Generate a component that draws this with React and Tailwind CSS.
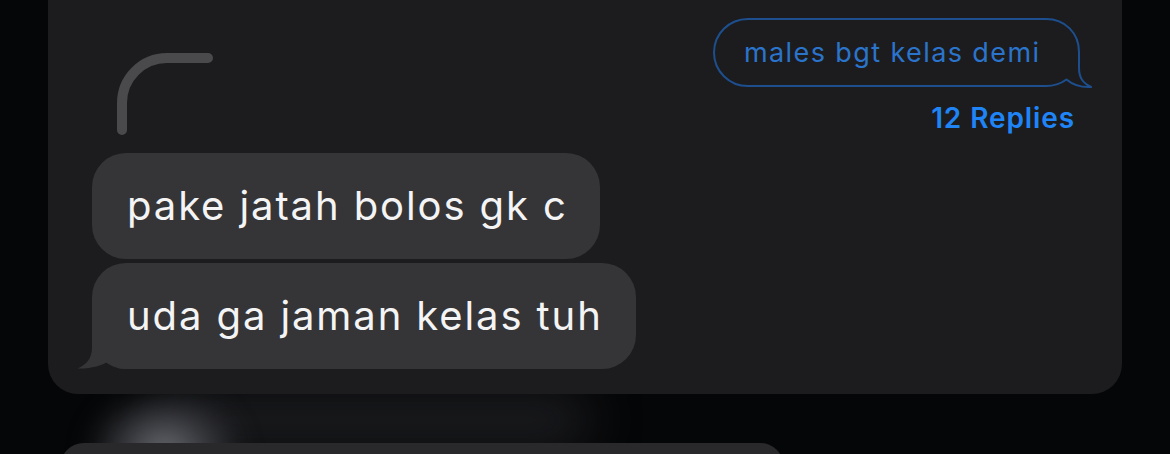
import React from "react";

function OutlineBubble() {
  return (
    <div className="relative w-[367px] h-[69px] flex items-center pl-[31px]">
      <svg
        className="absolute left-0 top-0 overflow-visible"
        width="380"
        height="71"
        viewBox="0 0 380 71"
        fill="none"
      >
        <path
          d="M35 1 H333 C352 1 366 15 366 34 V50 C366 60 370 65 378 69 C369 69.5 360 67 353.5 61.5 C348 65.5 342 68 333 68 H35 C16 68 1 53 1 34.5 C1 16 16 1 35 1 Z"
          stroke="#1d4f8f"
          strokeWidth="2"
          strokeLinejoin="round"
        />
      </svg>
      <span className="relative text-[27px] leading-none text-[#2b74cc] tracking-[1.4px]">
        males bgt kelas demi
      </span>
    </div>
  );
}

function GrayBubble({ width, children, tail }) {
  return (
    <div
      className={`relative h-[106px] bg-[#353538] rounded-[34px] flex items-center pl-[35px] ${width}`}
    >
      {tail && (
        <svg
          className="absolute left-[-16px] bottom-0"
          width="50"
          height="40"
          viewBox="0 0 50 40"
        >
          <path
            d="M16 0 L50 0 L50 40 C42 40 37.5 36.5 33.5 31.5 C26 37 14 40 1.5 39.5 C10 36 16 30 16 18 Z"
            fill="#353538"
          />
        </svg>
      )}
      <span className="relative text-[40px] leading-none text-[#f4f4f5] tracking-[1.9px]">
        {children}
      </span>
    </div>
  );
}

export default function App() {
  return (
    <div
      className="relative w-[1170px] h-[454px] overflow-hidden bg-[#050607]"
      style={{ fontFamily: "Inter, 'Noto Sans', sans-serif" }}
    >
      <div className="absolute left-[170px] top-[392px] w-[420px] h-[56px] bg-[#1b1c1f] blur-xl rounded-full" />
      <div className="absolute left-[85px] top-[388px] w-[160px] h-[90px] bg-[radial-gradient(ellipse_at_50%_70%,#6f7077_0%,#3a3b40_35%,transparent_70%)] blur-md" />

      <div className="relative flex flex-col">
        <div className="ml-[48px] w-[1074px] h-[394px] bg-[#1c1c1e] rounded-b-[30px] pt-[18px] pl-[44px] flex flex-col">
          <div className="flex h-[135px]">
            <svg
              className="ml-[20px] mt-[30px]"
              width="110"
              height="90"
              viewBox="112 48 110 90"
              fill="none"
            >
              <path
                d="M122 130 V103 A45 45 0 0 1 167 58 H208"
                stroke="#4a4a4d"
                strokeWidth="10"
                strokeLinecap="round"
              />
            </svg>
            <div className="ml-auto mr-[42px] flex flex-col items-end">
              <OutlineBubble />
              <div className="mt-[17px] mr-[5px] text-[28px] leading-none font-semibold text-[#1f85f7] tracking-[0.9px]">
                12 Replies
              </div>
            </div>
          </div>
          <div className="flex flex-col gap-[4px]">
            <GrayBubble width="w-[508px]">pake jatah bolos gk c</GrayBubble>
            <GrayBubble width="w-[544px]" tail>
              uda ga jaman kelas tuh
            </GrayBubble>
          </div>
        </div>
        <div className="mt-[49px] ml-[60px] w-[724px] h-[40px] bg-[#29292b] rounded-t-[24px]" />
      </div>
    </div>
  );
}
